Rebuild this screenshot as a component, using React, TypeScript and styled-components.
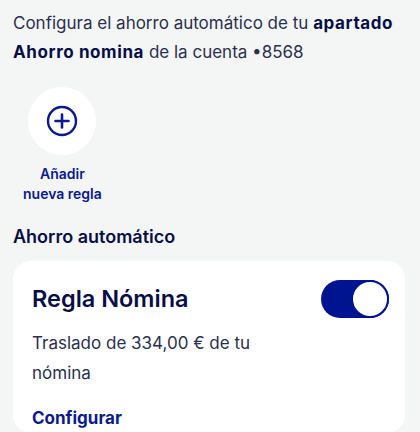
import React, { useState } from 'react';
import styled, { createGlobalStyle } from 'styled-components';

const GlobalStyle = createGlobalStyle`
  html, body {
    margin: 0;
    padding: 0;
    background: #f4f6f5;
  }
  body {
    font-family: Inter, "Liberation Sans", sans-serif;
    color: #070e46;
  }
`;

const Page = styled.div`
  width: 420px;
  height: 432px;
  overflow: hidden;
  box-sizing: border-box;
  padding: 9px 13px 0 13px;
  display: flex;
  flex-direction: column;
`;

const Intro = styled.p`
  margin: 0;
  font-size: 17px;
  line-height: 29px;
  color: #2a2f4f;

  b {
    font-weight: 700;
    letter-spacing: 0.6px;
    color: #070e46;
  }
`;

const AddRule = styled.button`
  align-self: flex-start;
  margin: 20px 0 0 10px;
  padding: 0;
  border: 0;
  background: none;
  display: flex;
  flex-direction: column;
  align-items: center;
  font-family: inherit;
  cursor: pointer;
`;

const AddCircle = styled.span`
  width: 68px;
  height: 68px;
  border-radius: 50%;
  background: #ffffff;
  display: flex;
  align-items: center;
  justify-content: center;
`;

const AddLabel = styled.span`
  margin-top: 9px;
  font-size: 14px;
  line-height: 20px;
  font-weight: 600;
  color: #0a1a8c;
  text-align: center;
`;

const SectionTitle = styled.h2`
  margin: 20px 0 0 0;
  font-size: 18px;
  line-height: 26px;
  font-weight: 600;
  color: #070e46;
`;

const Card = styled.div`
  margin-top: 11px;
  background: #ffffff;
  border-radius: 18px;
  padding: 18px 16px 0 19px;
  width: 392px;
  box-sizing: border-box;
`;

const CardHeader = styled.div`
  display: flex;
  align-items: center;
  justify-content: space-between;
`;

const CardTitle = styled.h3`
  margin: 0;
  font-size: 23.5px;
  line-height: 40px;
  font-weight: 600;
  color: #070e46;
`;

const Toggle = styled.button<{ $on: boolean }>`
  width: 68px;
  height: 38px;
  border-radius: 19px;
  border: 0;
  padding: 0;
  background: ${(p) => (p.$on ? '#001391' : '#c7cbd6')};
  display: flex;
  align-items: center;
  justify-content: ${(p) => (p.$on ? 'flex-end' : 'flex-start')};
  cursor: pointer;
`;

const Knob = styled.span`
  width: 34px;
  height: 34px;
  border-radius: 50%;
  background: #ffffff;
  border: 2px solid #001391;
`;

const CardText = styled.p`
  margin: 9px 0 0 0;
  max-width: 260px;
  font-size: 17px;
  line-height: 30px;
  color: #2a2f4f;
`;

const CardLink = styled.a`
  display: block;
  margin-top: 15px;
  font-size: 17px;
  line-height: 30px;
  font-weight: 700;
  color: #0a1a8c;
  text-decoration: none;
`;

const PlusIcon = () => (
  <svg width="32" height="32" viewBox="0 0 32 32" fill="none">
    <circle cx="16" cy="16" r="14" stroke="#0a1a8c" strokeWidth="2.4" />
    <path d="M16 9.5v13M9.5 16h13" stroke="#0a1a8c" strokeWidth="2.6" strokeLinecap="round" />
  </svg>
);

export default function App() {
  const [on, setOn] = useState(true);

  return (
    <>
      <GlobalStyle />
      <Page>
        <Intro>
          Configura el ahorro automático de tu <b>apartado</b> <b>Ahorro nomina</b> de la cuenta •8568
        </Intro>

        <AddRule>
          <AddCircle>
            <PlusIcon />
          </AddCircle>
          <AddLabel>
            Añadir
            <br />
            nueva regla
          </AddLabel>
        </AddRule>

        <SectionTitle>Ahorro automático</SectionTitle>

        <Card>
          <CardHeader>
            <CardTitle>Regla Nómina</CardTitle>
            <Toggle $on={on} onClick={() => setOn(!on)}>
              <Knob />
            </Toggle>
          </CardHeader>
          <CardText>Traslado de 334,00 € de tu nómina</CardText>
          <CardLink href="#">Configurar</CardLink>
        </Card>
      </Page>
    </>
  );
}
